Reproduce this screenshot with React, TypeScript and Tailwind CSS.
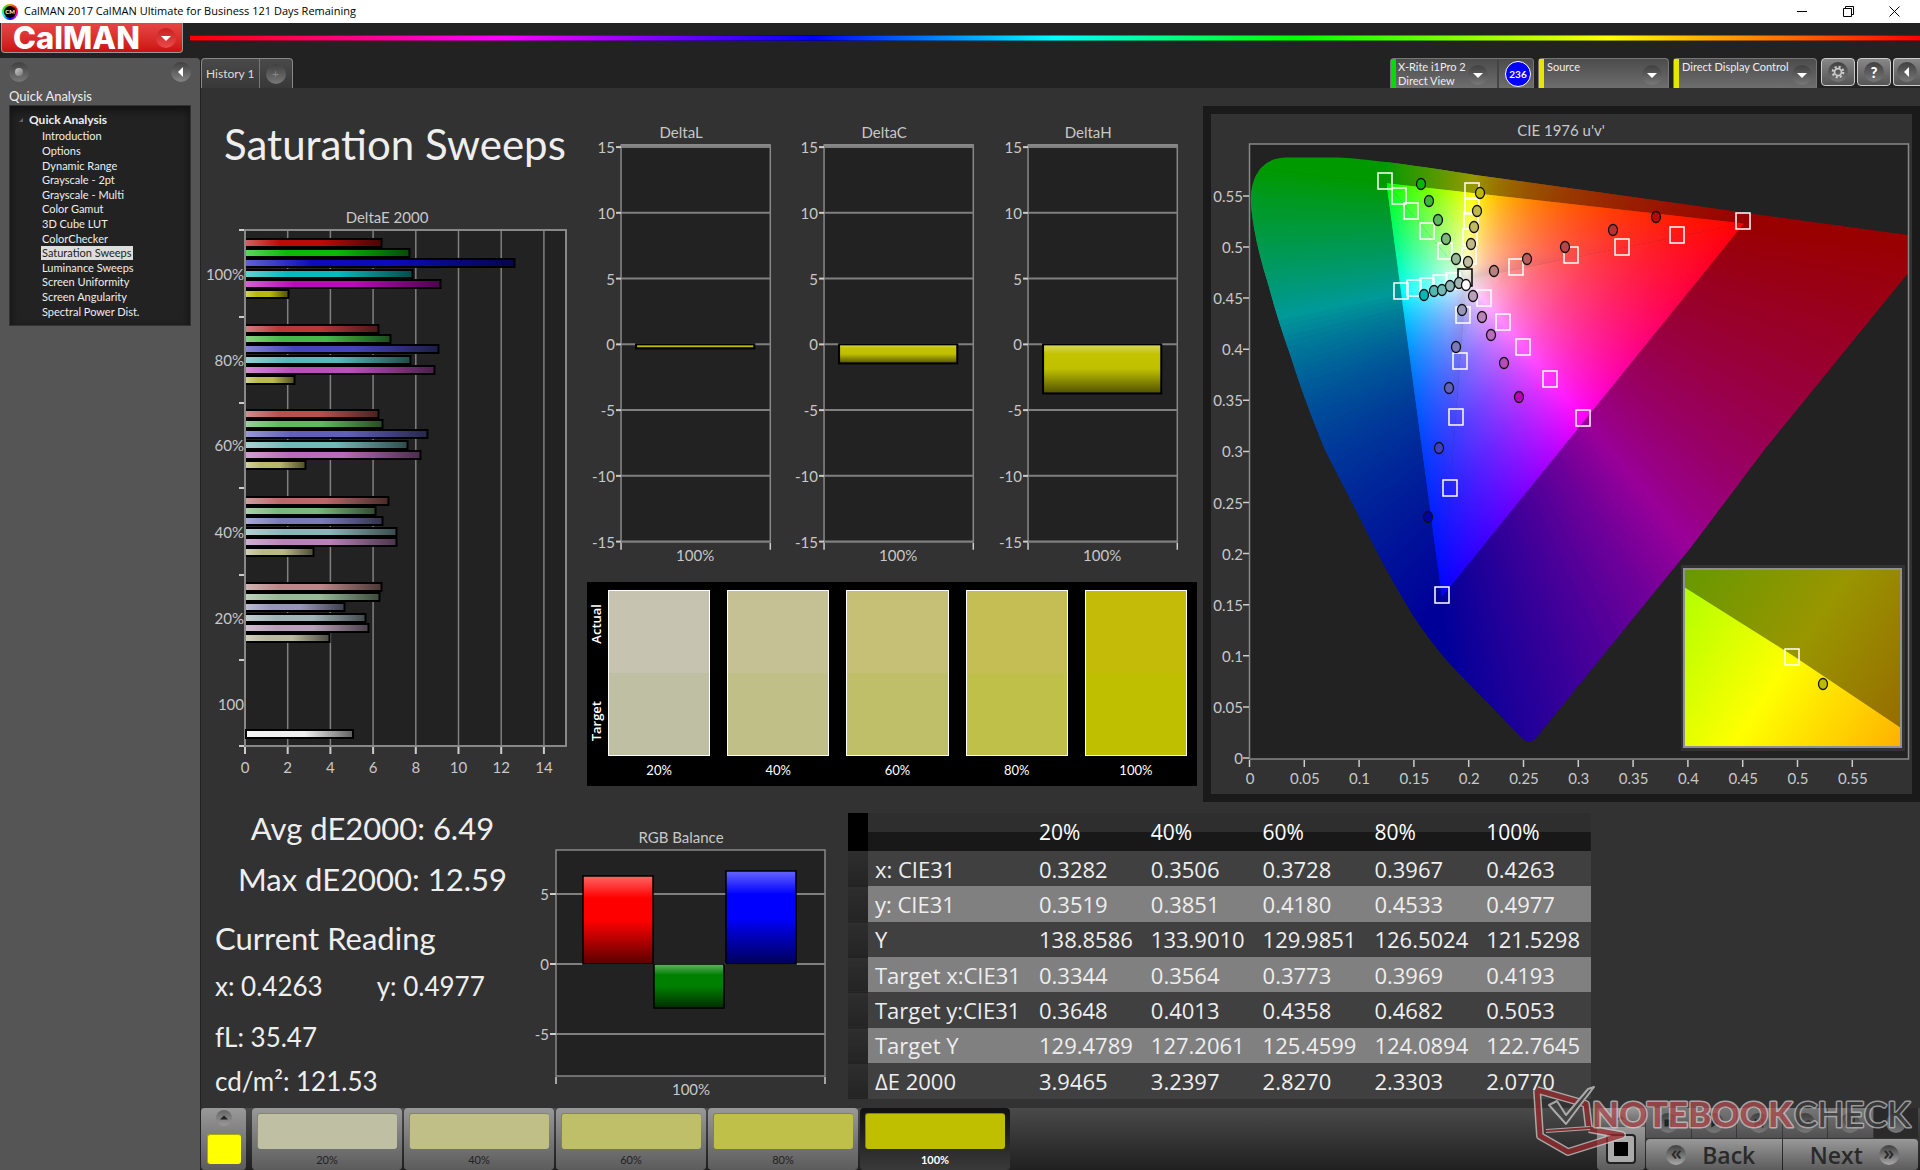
import React from "react";

type Pt = [number, number];

/* ---------- shared look ---------- */

const CHART = "font-['Lato',sans-serif] text-[15px]";

function Round({ children, className = "" }: { children?: React.ReactNode; className?: string }) {
  return (
    <span
      className={`flex size-5 shrink-0 items-center justify-center rounded-full bg-gradient-to-b from-[#404040] to-[#787878] ${className}`}
    >
      {children}
    </span>
  );
}

function Caret({ className = "size-2.5 fill-white" }: { className?: string }) {
  return (
    <svg viewBox="0 0 10 10" className={className} aria-hidden="true">
      <path d="M0 3h10L5 8z" />
    </svg>
  );
}

/* ---------- window frame ---------- */

function TitleBar() {
  return (
    <div className="flex h-[23px] items-center bg-white pl-0.5 text-black">
      <span className="flex size-4 items-center justify-center rounded-full bg-[conic-gradient(#f80,#f00,#f0f,#00f,#0ff,#0f0,#f80)]">
        <span className="flex size-3 items-center justify-center rounded-full bg-black text-[6px] font-bold text-white">CM</span>
      </span>
      <span className="ml-1.5 font-['Open_Sans',sans-serif] text-[11px]">
        CalMAN 2017 CalMAN Ultimate for Business 121 Days Remaining
      </span>
      <div className="ml-auto flex h-full pr-[3px]">
        <button aria-label="Minimize" className="flex w-[46px] items-center justify-center">
          <svg viewBox="0 0 11 11" className="size-[11px]" stroke="#000" fill="none"><path d="M0 5.500h10" /></svg>
        </button>
        <button aria-label="Restore" className="flex w-[46px] items-center justify-center">
          <svg viewBox="0 0 11 11" className="size-[11px]" stroke="#000" fill="none"><path d="M.5 2.500h8v8h-8zM2.500 2V.5h8v8H9" /></svg>
        </button>
        <button aria-label="Close" className="flex w-[46px] items-center justify-center">
          <svg viewBox="0 0 11 11" className="size-[11px]" stroke="#000" fill="none"><path d="M.5.5l10 10M10.500.5l-10 10" /></svg>
        </button>
      </div>
    </div>
  );
}

function Header() {
  return (
    <div className="flex h-[35px] items-start bg-[#222]">
      <button className="ml-px flex h-[30px] w-[182px] items-center justify-between rounded-b border border-t-0 border-[#999] bg-gradient-to-b from-[#e64545] to-[#cc0f0f] pl-[11px] pr-1.5">
        <span className="font-['Inter',sans-serif] text-[31px] font-extrabold leading-[28px] text-white">CalMAN</span>
        <span className="flex size-5 items-center justify-center rounded-full bg-gradient-to-b from-[#c81e1e] to-[#ea4a4a]">
          <Caret />
        </span>
      </button>
      <div className="ml-[7px] mt-3 h-1.5 flex-1 border-y border-black/40 bg-[linear-gradient(90deg,#f00_0%,#f0f_18%,#00f_36%,#0ff_50%,#0f0_64%,#ff0_82%,#f00_100%)]" />
    </div>
  );
}

/* ---------- sidebar ---------- */

const PAGES = [
  "Introduction", "Options", "Dynamic Range", "Grayscale - 2pt", "Grayscale - Multi", "Color Gamut", "3D Cube LUT",
  "ColorChecker", "Saturation Sweeps", "Luminance Sweeps", "Screen Uniformity", "Screen Angularity", "Spectral Power Dist.",
];

function Sidebar() {
  return (
    <aside className="w-[200px] shrink-0 rounded-tr bg-[#555] px-[9px] text-[#eee]">
      <div className="flex justify-between pt-1">
        <Round className="from-[#4a4a4a] to-[#6a6a6a]">
          <span className="size-2 rounded-full bg-gradient-to-br from-[#ccc] to-[#777]" />
        </Round>
        <button aria-label="Collapse sidebar">
          <Round className="from-[#4a4a4a] to-[#858585]">
            <svg viewBox="0 0 10 10" className="size-2.5 fill-white"><path d="M7 0v10L2 5z" /></svg>
          </Round>
        </button>
      </div>
      <h2 className="mt-1 text-[13px] leading-5">Quick Analysis</h2>
      <nav className="-mt-px h-[221px] border border-[#333] bg-[#222] pl-[9px] pt-[7px] shadow-[inset_0_4px_8px_#111]">
        <div className="flex items-center gap-1.5 text-[12px] font-bold leading-[14px]">
          <svg viewBox="0 0 6 6" className="size-1 fill-[#666]" aria-hidden="true"><path d="M6 0v6H0z" /></svg>
          Quick Analysis
        </div>
        <ul className="mt-0.5 grid h-[190px] auto-rows-fr pl-[22px] text-[11px]">
          {PAGES.map((p) => (
            <li key={p} className="flex items-center">
              <a
                href="#page"
                className={p === "Saturation Sweeps" ? "bg-[#ddd] px-px leading-[14px] text-[#222]" : "px-px leading-[14px]"}
              >
                {p}
              </a>
            </li>
          ))}
        </ul>
      </nav>
    </aside>
  );
}

/* ---------- toolbar above the workspace ---------- */

const DEVICE = "flex h-[30px] items-start rounded-t-[4px] border border-b-0 border-[#777] bg-gradient-to-b from-[#4c4c4c] to-[#6e6e6e] text-left text-[11px] leading-[14px] text-[#eee]";

function Toolbar() {
  return (
    <div className="flex h-[30px] bg-[#222]">
      <div className="flex rounded-t border border-b-0 border-[#888] bg-gradient-to-b from-[#4a4a4a] to-[#383838]">
        <button className="border-r border-[#777] px-1 text-[12px] text-[#ddd]">History 1</button>
        <button aria-label="Add history" className="flex w-8 items-center justify-center">
          <Round className="from-[#303030] to-[#484848] text-[12px] text-[#888]">+</Round>
        </button>
      </div>
      <div className="ml-auto flex items-start">
        <button className={`${DEVICE} w-[144px]`}>
          <span className="h-full w-[5px] bg-[#0d0]" />
          <span className="ml-0.5 w-[70px] whitespace-nowrap pt-px">X-Rite i1Pro 2<br />Direct View</span>
          <Round className="mt-1.5"><Caret /></Round>
          <span className="ml-auto h-full border-l-2 border-[#444] pl-1.5 pr-0.5">
            <span className="mt-0.5 flex size-[26px] items-center justify-center rounded-full border border-white bg-[#00f] text-[10px] font-bold text-white">236</span>
          </span>
        </button>
        <button className={`${DEVICE} ml-1 w-[131px]`}>
          <span className="h-full w-[5px] bg-[#e6e600]" />
          <span className="ml-[3px] pt-px">Source</span>
          <Round className="ml-auto mr-1.5 mt-1.5"><Caret /></Round>
        </button>
        <button className={`${DEVICE} ml-1 w-[144px]`}>
          <span className="h-full w-[5px] bg-[#e6e600]" />
          <span className="ml-[3px] whitespace-nowrap pt-px">Direct Display Control</span>
          <Round className="ml-auto mr-1 mt-1.5"><Caret /></Round>
        </button>
        <button aria-label="Settings" className="ml-1 flex h-7 w-[34px] items-center justify-center rounded border border-[#ccc] bg-gradient-to-b from-[#888] to-[#555]">
          <Round>
            <svg viewBox="0 0 16 16" className="size-3.5" fill="none" stroke="#ccc">
              <circle cx="8" cy="8" r="4" strokeWidth="2" />
              <circle cx="8" cy="8" r="6" strokeWidth="2.500" strokeDasharray="2.356" />
            </svg>
          </Round>
        </button>
        <button aria-label="Help" className="ml-0.5 flex h-7 w-[34px] items-center justify-center rounded border border-[#ccc] bg-gradient-to-b from-[#888] to-[#555]">
          <Round className="text-[15px] font-black text-white">?</Round>
        </button>
        <button aria-label="Collapse toolbar" className="ml-0.5 flex h-7 w-[27px] items-center justify-center rounded-l border border-r-0 border-[#ccc] bg-gradient-to-b from-[#888] to-[#555]">
          <Round><svg viewBox="0 0 10 10" className="size-2.5 fill-white"><path d="M7 0v10L2 5z" /></svg></Round>
        </button>
      </div>
    </div>
  );
}

/* ---------- DeltaE 2000 bars ---------- */

const DE_GROUPS: { label: string; y: number; bars: [string, number][] }[] = [
  { label: "100%", y: 238, bars: [["#b90b0b", 137], ["#0bb90b", 165], ["#0b0bb9", 270], ["#0bb9b9", 168], ["#b90bb9", 196], ["#b9b90b", 44]] },
  { label: "80%", y: 324, bars: [["#b93838", 134], ["#45b945", 146], ["#4545b9", 194], ["#55b9b9", 166], ["#b94fb9", 190], ["#b9b94f", 50]] },
  { label: "60%", y: 409, bars: [["#b95050", 134], ["#60b960", 138], ["#6060b9", 183], ["#74b9b9", 163], ["#b96cb9", 176], ["#b9b96c", 61]] },
  { label: "40%", y: 496, bars: [["#b96868", 144], ["#7ab97a", 131], ["#7a7ab9", 138], ["#8bb6b9", 152], ["#b982b9", 152], ["#b9b983", 69]] },
  { label: "20%", y: 582, bars: [["#b98888", 137], ["#96b996", 135], ["#9696b9", 100], ["#a2b6b9", 121], ["#b99fb9", 124], ["#b9b99d", 85]] },
];

function DeltaEChart() {
  return (
    <svg viewBox="201 205 379 578" className={`block w-full ${CHART}`} fill="#c8c8c8" role="img" aria-label="DeltaE 2000">
      <defs>
        <linearGradient id="sheen">
          <stop offset="0" stopColor="#fff" stopOpacity=".35" />
          <stop offset=".25" stopColor="#fff" stopOpacity="0" />
          <stop offset=".55" stopColor="#000" stopOpacity="0" />
          <stop offset="1" stopColor="#000" stopOpacity=".6" />
        </linearGradient>
      </defs>
      <text x="387" y="222" textAnchor="middle">DeltaE 2000</text>
      <rect x="245" y="229" width="321" height="516" fill="#222" />
      {[0, 2, 4, 6, 8, 10, 12, 14].map((v) => (
        <g key={v}>
          <path d={`M${245 + v * 21.35} 229V745`} stroke="#808080" strokeWidth="1.500" />
          <path d={`M${245 + v * 21.35} 745v8`} stroke="#ccc" strokeWidth="2" />
          <text x={245 + v * 21.35} y="772" textAnchor="middle">{v}</text>
        </g>
      ))}
      <rect x="245" y="229" width="321" height="516" fill="none" stroke="#888" strokeWidth="2" />
      {[229, 316, 402, 487, 574, 659, 745].map((y) => (
        <path key={y} d={`M239 ${y}h5`} stroke="#ccc" strokeWidth="2" />
      ))}
      {DE_GROUPS.map((g) => (
        <g key={g.label}>
          <text x="244" y={g.y + 41} textAnchor="end">{g.label}</text>
          {g.bars.map(([c, w], i) => {
            const y = g.y + Math.round(i * 10.2);
            return (
              <g key={i}>
                <rect x="246" y={y} width={w - 1} height="8" fill={c} />
                <rect x="246" y={y} width={w - 1} height="8" fill="url(#sheen)" />
                <path d={`M246 ${y}h${w - 1.5}v8h-${w - 1.5}`} fill="none" stroke="#000" strokeWidth="2" />
              </g>
            );
          })}
        </g>
      ))}
      <text x="244" y="709" textAnchor="end">100</text>
      <rect x="246" y="729" width="107" height="8" fill="#f0f0f0" />
      <rect x="246" y="729" width="107" height="8" fill="url(#sheen)" stroke="#000" strokeWidth="2" />
    </svg>
  );
}

/* ---------- DeltaL / DeltaC / DeltaH ---------- */

function DeltaChart({ name, drop }: { name: string; drop: number }) {
  return (
    <svg viewBox="0 120 203 461" className={`block w-full ${CHART}`} fill="#c8c8c8" role="img" aria-label={name}>
      <defs>
        <linearGradient id="yellowBar" x2="0" y2="1">
          <stop offset="0" stopColor="#d8d860" />
          <stop offset=".2" stopColor="#c3c300" />
          <stop offset=".5" stopColor="#c0c000" />
          <stop offset="1" stopColor="#505000" />
        </linearGradient>
      </defs>
      <text x="94" y="138" textAnchor="middle">{name}</text>
      <rect x="34" y="145" width="149" height="396" fill="#222" stroke="#888" strokeWidth="1.500" />
      <path d="M34 146h149" stroke="#888" strokeWidth="4" />
      {[15, 10, 5, 0, -5, -10, -15].map((v) => (
        <g key={v}>
          <path d={`M34 ${344 - v * 13.13}h149`} stroke="#808080" strokeWidth="2" />
          <path d={`M29 ${344 - v * 13.13}h5`} stroke="#ccc" strokeWidth="2" />
          <text x="28" y={350 - v * 13.13} textAnchor="end">{v}</text>
        </g>
      ))}
      <path d="M34 542v7M183 542v7" stroke="#ccc" strokeWidth="1.500" />
      <rect x="49" y="344" width="118" height={drop} fill="url(#yellowBar)" stroke="#000" strokeWidth="2" />
      <text x="108" y="560" textAnchor="middle">100%</text>
    </svg>
  );
}

/* ---------- swatches ---------- */

const SWATCHES = [
  { label: "20%", actual: "bg-[#c6c3b0]", target: "bg-[#bfbfa4]" },
  { label: "40%", actual: "bg-[#c6c195]", target: "bg-[#c0bf87]" },
  { label: "60%", actual: "bg-[#c6c077]", target: "bg-[#bfbf6a]" },
  { label: "80%", actual: "bg-[#c5be55]", target: "bg-[#bfc04a]" },
  { label: "100%", actual: "bg-[#c4bb08]", target: "bg-[#bfbf00]" },
];

function SwatchPanel() {
  return (
    <div className="flex bg-black pb-1.5 pr-2.5 pt-2 text-[13px] text-white">
      <div className="flex h-[166px] w-[21px] flex-col items-center justify-between py-3.5 pr-1 font-['Open_Sans',sans-serif] font-semibold">
        {["Actual", "Target"].map((t) => (
          <span key={t} className="rotate-180 leading-4 [writing-mode:vertical-rl]">{t}</span>
        ))}
      </div>
      <div className="grid flex-1 grid-cols-5 gap-x-[17px]">
        {SWATCHES.map((s) => (
          <div key={s.label} className="text-center">
            <div className="flex h-[166px] flex-col border border-white">
              <div className={`flex-1 ${s.actual}`} />
              <div className={`flex-1 ${s.target}`} />
            </div>
            <div className="mt-1 leading-5">{s.label}</div>
          </div>
        ))}
      </div>
    </div>
  );
}

/* ---------- CIE 1976 u'v' ---------- */

const px = (u: number, v: number): Pt => [1249.5 + u * 1096.3, 758 - v * 1022];

const R_UV: Pt = [0.4507, 0.5229];
const G_UV: Pt = [0.125, 0.5625];
const B_UV: Pt = [0.1754, 0.1579];
const W_UV: Pt = [0.1978, 0.4683];

/* RGB colour of a chromaticity, scaled so that its largest channel is full */
function colourAt(u: number, v: number, k: number): string {
  const x = (9 * u) / (6 * u - 16 * v + 12);
  const y = (4 * v) / (6 * u - 16 * v + 12);
  const X = x / y;
  const Z = (1 - x - y) / y;
  const lin = [
    3.2406 * X - 1.5372 - 0.4986 * Z,
    -0.9689 * X + 1.8758 + 0.0415 * Z,
    0.0557 * X - 0.204 + 1.057 * Z,
  ].map((c) => Math.max(0, c));
  const m = Math.max(...lin);
  return `rgb(${lin.map((c) => Math.round(255 * k * Math.pow(c / m, 0.85))).join(",")})`;
}

const beyond = (from: Pt, to: Pt, k: number) => `${from[0] + (to[0] - from[0]) * k} ${from[1] + (to[1] - from[1]) * k}`;

/* slices of one triangle side, each overlapping the next */
const STEPS = 100;
function slices(a: Pt, b: Pt) {
  const at = (t: number): Pt => [a[0] + (b[0] - a[0]) * t, a[1] + (b[1] - a[1]) * t];
  return Array.from({ length: STEPS }, (_, i) => ({
    from: px(...at(i / STEPS)),
    to: px(...at(Math.min(1, (i + 2) / STEPS))),
    mid: at((i + 0.5) / STEPS),
  }));
}

/* every side with the primary that faces it */
const SIDES = [
  { id: "rg", parts: slices(R_UV, G_UV), facing: px(...B_UV) },
  { id: "gb", parts: slices(G_UV, B_UV), facing: px(...R_UV) },
  { id: "br", parts: slices(B_UV, R_UV), facing: px(...G_UV) },
];

const CORNERS: [Pt, Pt, Pt, string][] = [
  [px(...R_UV), px(...G_UV), px(...B_UV), "#990000"],
  [px(...G_UV), px(...B_UV), px(...R_UV), "#009900"],
  [px(...B_UV), px(...R_UV), px(...G_UV), "#000099"],
];

const LOCUS =
  "M1251 205C1250 185 1256 157.500 1287 157.500H1338C1360 158 1420 166 1475 175L1590 191L1746 213L1908 235V273L1764 450L1691 547L1535 739Q1529 744 1523 739L1448 662Q1425 635 1411 612Q1382 564 1361 520L1325 450Q1303 396 1292 360Q1277 318 1269 287Q1254 240 1251 205Z";

function ColourField() {
  const w = px(...W_UV);
  return (
    <>
      <g clipPath="url(#locus)">
        {CORNERS.map(([c, p, q, fill]) => (
          <path key={fill} d={`M${c[0]} ${c[1]}L${beyond(p, c, 6)}L${beyond(q, c, 6)}z`} fill={fill} stroke={fill} />
        ))}
        {SIDES.map(({ id, parts, facing }) =>
          parts.map(({ from, to, mid }, i) => (
            <path
              key={id + i}
              d={`M${from[0]} ${from[1]}L${beyond(facing, from, 6)}L${beyond(facing, to, 6)}L${to[0]} ${to[1]}z`}
              fill={colourAt(mid[0], mid[1], 0.6)}
            />
          )),
        )}
      </g>
      <g clipPath="url(#gamut)">
        {SIDES.map(({ id, parts }) =>
          parts.map(({ from, to, mid }, i) => {
            const m = px(...mid);
            return (
              <g key={id + i}>
                <linearGradient id={`ray-${id}-${i}`} gradientUnits="userSpaceOnUse" x1={w[0]} y1={w[1]} x2={m[0]} y2={m[1]}>
                  {[0, 0.15, 0.3, 0.5, 0.7, 0.85, 0.95, 1].map((t) => (
                    <stop key={t} offset={t} stopColor={colourAt(W_UV[0] + (mid[0] - W_UV[0]) * t, W_UV[1] + (mid[1] - W_UV[1]) * t, 1)} />
                  ))}
                </linearGradient>
                <path d={`M${w[0]} ${w[1]}L${beyond(w, from, 1.1)}L${beyond(w, to, 1.1)}z`} fill={`url(#ray-${id}-${i})`} />
              </g>
            );
          }),
        )}
      </g>
    </>
  );
}

const TARGETS: Pt[] = [
  [1385, 181], [1399, 196], [1411, 211], [1427, 231], [1445, 251],
  [1401, 291], [1414, 288], [1427, 286], [1440, 283], [1453, 281],
  [1472, 191], [1472, 206], [1471, 221], [1470, 237], [1469, 256],
  [1516, 267], [1571, 255], [1622, 247], [1677, 235], [1743, 221],
  [1484, 298], [1503, 322], [1523, 347], [1550, 379], [1583, 418],
  [1463, 315], [1460, 361], [1456, 417], [1450, 488], [1442, 595],
];

const READINGS: [number, number, string][] = [
  [1421, 184, "#00b900"], [1429, 201, "#38b938"], [1438, 220, "#5cb95c"], [1446, 239, "#7ab97a"], [1456, 259, "#96b996"],
  [1480, 193, "#c0b900"], [1477, 211, "#bfb945"], [1474, 227, "#bfb968"], [1471, 244, "#bfb983"], [1468, 262, "#bfbca0"],
  [1494, 271, "#b98080"], [1527, 259, "#b95c5c"], [1565, 247, "#b94545"], [1613, 230, "#b93030"], [1656, 217, "#b90808"],
  [1424, 295, "#00b9b0"], [1434, 291, "#50b9b4"], [1442, 290, "#70b9b4"], [1450, 286, "#8bb6b4"], [1459, 283, "#a2b6b6"],
  [1519, 397, "#b900b9"], [1504, 363, "#b94bb9"], [1491, 335, "#b96cb9"], [1482, 317, "#b982b9"], [1473, 296, "#b99fb9"],
  [1462, 310, "#9696b9"], [1456, 347, "#7a7ab9"], [1449, 388, "#6060b9"], [1439, 448, "#4040b9"], [1428, 517, "#0000a8"],
  [1466, 285, "#ffffff"],
];

function CieChart() {
  const tri = [R_UV, G_UV, B_UV].map((p) => px(...p).join(" ")).join("L");
  const ticks = Array.from({ length: 12 }, (_, i) => i);
  return (
    <svg viewBox="1211 114 701 680" className={`block w-full ${CHART}`} fill="#c8c8c8" role="img" aria-label="CIE 1976 u'v'">
      <defs>
        <clipPath id="locus"><path d={LOCUS} /></clipPath>
        <clipPath id="gamut"><path d={`M${tri}z`} /></clipPath>
        <linearGradient id="insetDark" gradientUnits="userSpaceOnUse" x1="1662" y1="571" x2="1922" y2="743">
          <stop offset="0" stopColor="#609900" />
          <stop offset=".5" stopColor="#999600" />
          <stop offset="1" stopColor="#966400" />
        </linearGradient>
        <linearGradient id="insetBright" gradientUnits="userSpaceOnUse" x1="1662" y1="571" x2="1922" y2="743">
          <stop offset="0" stopColor="#a0ff00" />
          <stop offset=".5" stopColor="#ffff00" />
          <stop offset="1" stopColor="#ffa800" />
        </linearGradient>
      </defs>
      <text x="1561" y="136" textAnchor="middle">CIE 1976 u'v'</text>
      <rect x="1249.5" y="144" width="659" height="615" fill="#222" />
      <ColourField />
      <rect x="1249.5" y="144" width="659" height="615" fill="none" stroke="#888" strokeWidth="1.500" />
      {ticks.map((i) => (
        <g key={i} stroke="#ccc" strokeWidth="1.500">
          <path d={`M${1249.5 + i * 54.8} 760v7M1243 ${758 - i * 51.1}h6`} />
        </g>
      ))}
      {ticks.map((i) => (
        <g key={i}>
          <text x={1250 + i * 54.8} y="784" textAnchor="middle">{i / 20}</text>
          <text x="1243" y={764 - i * 51.1} textAnchor="end">{i / 20}</text>
        </g>
      ))}
      {TARGETS.map(([x, y], i) => (
        <rect key={i} x={x - 7} y={y - 8} width="14" height="16" fill="none" stroke="#fff" strokeWidth="1.500" />
      ))}
      <rect x="1458" y="269" width="14" height="17" fill="none" stroke="#000" strokeWidth="1.500" />
      {READINGS.map(([x, y, c], i) => (
        <ellipse key={i} cx={x} cy={y} rx="4.500" ry="5.500" fill={c} stroke="#111" strokeWidth="1.300" />
      ))}
      <rect x="1681" y="565" width="224" height="186" fill="#323232" />
      <rect x="1684" y="569" width="217" height="178" fill="url(#insetDark)" />
      <path d="M1684 587L1792 655L1901 728V747H1684z" fill="url(#insetBright)" />
      <rect x="1684" y="569" width="217" height="178" fill="none" stroke="#909090" strokeWidth="2" />
      <rect x="1785" y="649" width="14" height="16" fill="none" stroke="#fff" strokeWidth="1.500" />
      <ellipse cx="1823" cy="684" rx="4.500" ry="5.500" fill="#bfb900" stroke="#111" strokeWidth="1.300" />
    </svg>
  );
}

/* ---------- RGB balance ---------- */

function RgbChart() {
  const bars: [string, string, number, number, number][] = [
    ["red", "#ff0000", 583, 876, 88],
    ["green", "#008000", 654, 964, 44],
    ["blue", "#0000ff", 726, 871, 93],
  ];
  return (
    <svg viewBox="520 820 320 284" className={`block w-full ${CHART}`} fill="#c8c8c8" role="img" aria-label="RGB Balance">
      <defs>
        <linearGradient id="sheenDown" x2="0" y2="1">
          <stop offset="0" stopColor="#fff" stopOpacity=".4" />
          <stop offset=".25" stopColor="#fff" stopOpacity="0" />
          <stop offset=".5" stopColor="#000" stopOpacity="0" />
          <stop offset="1" stopColor="#000" stopOpacity=".65" />
        </linearGradient>
      </defs>
      <text x="681" y="843" textAnchor="middle">RGB Balance</text>
      <rect x="556" y="850" width="269" height="226" fill="#222" stroke="#888" strokeWidth="1.500" />
      {[5, 0, -5].map((v) => (
        <g key={v}>
          <path d={`M556 ${964 - v * 14}h269`} stroke="#808080" strokeWidth="2" />
          <path d={`M550 ${964 - v * 14}h6`} stroke="#ccc" strokeWidth="2" />
          <text x="549" y={970 - v * 14} textAnchor="end">{v}</text>
        </g>
      ))}
      <path d="M556 1077v7M825 1077v7" stroke="#ccc" strokeWidth="1.500" />
      {bars.map(([k, c, x, y, h]) => (
        <g key={k}>
          <rect x={x} y={y} width="70" height={h} fill={c} />
          <rect x={x} y={y} width="70" height={h} fill="url(#sheenDown)" stroke="#000" strokeWidth="1.500" />
        </g>
      ))}
      <text x="691" y="1095" textAnchor="middle">100%</text>
    </svg>
  );
}

/* ---------- table ---------- */

const ROWS = [
  ["x: CIE31", "0.3282", "0.3506", "0.3728", "0.3967", "0.4263"],
  ["y: CIE31", "0.3519", "0.3851", "0.4180", "0.4533", "0.4977"],
  ["Y", "138.8586", "133.9010", "129.9851", "126.5024", "121.5298"],
  ["Target x:CIE31", "0.3344", "0.3564", "0.3773", "0.3969", "0.4193"],
  ["Target y:CIE31", "0.3648", "0.4013", "0.4358", "0.4682", "0.5053"],
  ["Target Y", "129.4789", "127.2061", "125.4599", "124.0894", "122.7645"],
  ["ΔE 2000", "3.9465", "3.2397", "2.8270", "2.3303", "2.0770"],
];

function DataTable() {
  return (
    <table className="h-[286px] w-full table-fixed border-collapse text-left font-['Open_Sans',sans-serif] text-[22px] leading-7 text-[#eee]">
      <colgroup>
        <col className="w-5" />
        <col className="w-[164px]" />
      </colgroup>
      <thead>
        <tr className="h-[38px] bg-[linear-gradient(#2e2e2e_50%,#181818_50%)] text-[21px] text-white">
          <th className="bg-black" />
          <th />
          {["20%", "40%", "60%", "80%", "100%"].map((h) => (
            <th key={h} className="pl-[7px] font-medium">{h}</th>
          ))}
        </tr>
      </thead>
      <tbody>
        {ROWS.map((r) => (
          <tr key={r[0]} className="odd:bg-[#404040] even:bg-[#808080]">
            <td className="border-b border-[#222] bg-gradient-to-b from-[#2e2e2e] to-[#242424]" />
            {r.map((c, i) => (
              <td key={i} className="whitespace-nowrap pl-[7px]">{c}</td>
            ))}
          </tr>
        ))}
      </tbody>
    </table>
  );
}

/* ---------- bottom bar ---------- */

const METAL = "bg-gradient-to-b from-[#999] to-[#5c5c5c]";

const TRANSPORT: [string, React.ReactNode][] = [
  ["Stop", <path d="M4 4h8v8H4z" />],
  ["Play", <path d="M5 3l8 5-8 5z" />],
  ["Play range", <path d="M3 3h2v10H3zM11 3h2v10h-2zM6 5l4 3-4 3z" />],
  ["Continuous", <path d="M8 8C6 5 2 4.500 2 8s4 3 6 0 6-3.500 6 0-4 3-6 0z" fill="none" stroke="#333" strokeWidth="1.500" />],
  ["Repeat", <path d="M12 5a5 5 0 1 0 1 4M13 2v4H9" fill="none" stroke="#333" strokeWidth="1.500" />],
];

function BottomBar() {
  const tabs = ["bg-[#bfbfa4]", "bg-[#c0bf87]", "bg-[#bfbf6a]", "bg-[#bfc04a]", "bg-[#bfbf00]"];
  return (
    <div className="relative flex h-[62px] gap-0.5 bg-gradient-to-b from-[#4a4a4a] to-[#202020]">
      <button aria-label="Show patterns" className={`mr-1 flex w-[45px] flex-col items-center justify-between rounded pb-1.5 pt-0.5 ${METAL}`}>
        <span className="flex size-4 items-center justify-center rounded-full bg-gradient-to-b from-[#666] to-[#999]">
          <Caret className="size-2 rotate-180 fill-[#222]" />
        </span>
        <span className="h-[30px] w-[34px] rounded-[3px] border-l border-t border-[#aa0] bg-[#ff0]" />
      </button>
      {SWATCHES.map((s, i) => (
        <button
          key={s.label}
          className={
            i === 4
              ? "flex w-[150px] flex-col items-stretch rounded bg-gradient-to-b from-[#111] to-[#3a3a3a] px-[5px] pt-[5px] text-[11px] font-bold text-white"
              : `flex w-[150px] flex-col items-stretch rounded px-[5px] pt-[5px] text-[11px] text-[#222] ${METAL}`
          }
        >
          <span className={`h-9 rounded-[3px] border-l border-t border-black/30 ${tabs[i]}`} />
          <span className="mt-1 leading-[14px]">{s.label}</span>
        </button>
      ))}
      <div className="ml-auto flex gap-px pr-0.5">
        <div className="flex w-12 flex-col">
          <button aria-label="Expand" className={`flex h-[19px] items-center justify-center rounded-t ${METAL}`}>
            <Caret className="size-2 rotate-180 fill-[#333]" />
          </button>
          <button aria-label="Stop reading" className={`flex flex-1 items-center justify-center rounded-b ${METAL}`}>
            <span className="flex size-[30px] items-center justify-center rounded border-2 border-[#222] bg-[#aaa]">
              <span className="size-3.5 bg-black" />
            </span>
          </button>
        </div>
        <div className="flex w-[272px] flex-col gap-px">
          <div className="grid h-[30px] grid-cols-6 gap-px">
            {TRANSPORT.map(([name, d]) => (
              <button key={name} aria-label={name} className="flex items-center justify-center bg-gradient-to-b from-[#777] to-[#505050]">
                <Round className="from-[#555] to-[#888]"><svg viewBox="0 0 16 16" className="size-3.5 fill-[#222]">{d}</svg></Round>
              </button>
            ))}
            <button aria-label="Unavailable" disabled className="flex items-center justify-center bg-[#2a2a2a]">
              <Round className="from-[#222] to-[#333]" />
            </button>
          </div>
          <div className="grid flex-1 grid-cols-2 gap-px font-['Open_Sans',sans-serif] text-[23px] font-semibold leading-[28px] text-[#2a2a2a]">
            <button className={`flex items-center justify-center gap-4 rounded-l pr-1.5 ${METAL}`}>
              <Round className="from-[#888] to-[#aaa] pb-1 text-[20px]">«</Round>Back
            </button>
            <button className={`flex items-center justify-center gap-4 rounded-r pl-2 ${METAL}`}>
              Next<Round className="from-[#888] to-[#aaa] pb-1 text-[20px]">»</Round>
            </button>
          </div>
        </div>
      </div>
      <svg viewBox="0 0 384 76" className="pointer-events-none absolute -top-6 right-1 w-96 opacity-75" role="img" aria-label="Notebookcheck">
        <g fill="none" strokeLinejoin="round">
          <path d="M5 6L54 20L57 45M5 6L8 52L36 68L90 51L57 45" stroke="#ccc" strokeWidth="8" />
          <path d="M5 6L54 20L57 45M5 6L8 52L36 68L90 51L57 45" stroke="#9a2a2e" strokeWidth="5" />
          <path d="M14 47L58 44" stroke="#ccc" strokeWidth="4" />
          <path d="M14 47L58 44" stroke="#9a2a2e" strokeWidth="2" />
          <path d="M17 21L25 17L34 31L56 5L62 3L34 40z" fill="#444" stroke="#ccc" strokeWidth="2" />
        </g>
        <g className="font-['Lato',sans-serif] text-[35px]" strokeLinejoin="round">
          <text x="60" y="43" className="font-black" fill="#b04a4e" stroke="#ccc" strokeWidth="3" paintOrder="stroke">NOTEBOOK</text>
          <text x="262" y="43" className="font-medium" fill="#3a3a3a" stroke="#bbb" strokeWidth="3" paintOrder="stroke">CHECK</text>
        </g>
      </svg>
    </div>
  );
}

/* ---------- page ---------- */

export default function App() {
  return (
    <div className="flex min-h-screen flex-col bg-[#222] font-['Lato',sans-serif]">
      <TitleBar />
      <Header />
      <div className="flex flex-1">
        <Sidebar />
        <main className="flex min-w-0 flex-1 flex-col border-l border-[#222] bg-[#323232]">
          <Toolbar />
          <div className="grid grid-cols-[minmax(0,379fr)_minmax(0,623fr)_minmax(0,717fr)]">
            <section>
              <h1 className="mt-[26px] whitespace-nowrap pl-[23px] text-[42px] leading-[60px] text-[#eee]">
                Saturation Sweeps
              </h1>
              <div className="mt-8"><DeltaEChart /></div>
            </section>
            <section className="pl-[7px] pr-1.5 pt-8">
              <div className="grid grid-cols-3">
                <DeltaChart name="DeltaL" drop={4} />
                <DeltaChart name="DeltaC" drop={19} />
                <DeltaChart name="DeltaH" drop={49} />
              </div>
              <SwatchPanel />
            </section>
            <section className="mt-[18px] self-start border-8 border-[#1a1a1a] bg-[#323232]">
              <CieChart />
            </section>
          </div>
          <div className="grid flex-1 grid-cols-[minmax(0,319fr)_minmax(0,320fr)_minmax(0,751fr)_minmax(0,329fr)] pt-px">
            <section className="whitespace-nowrap pl-3.5 text-[#eee]">
              <div className="pl-2.5 text-center text-[31px] leading-[51px]">
                <p>Avg dE2000: 6.49</p>
                <p>Max dE2000: 12.59</p>
              </div>
              <h2 className="mt-2 text-[31px] leading-[51px]">Current Reading</h2>
              <div className="text-[26px] leading-[45px]">
                <p className="flex gap-[54px]"><span>x: 0.4263</span><span>y: 0.4977</span></p>
                <p className="mt-1.5">fL: 35.47</p>
                <p className="leading-[42px]">cd/m²: 121.53</p>
              </div>
            </section>
            <section className="pt-[17px]"><RgbChart /></section>
            <section className="pl-2 pt-2.5"><DataTable /></section>
          </div>
          <BottomBar />
        </main>
      </div>
    </div>
  );
}
